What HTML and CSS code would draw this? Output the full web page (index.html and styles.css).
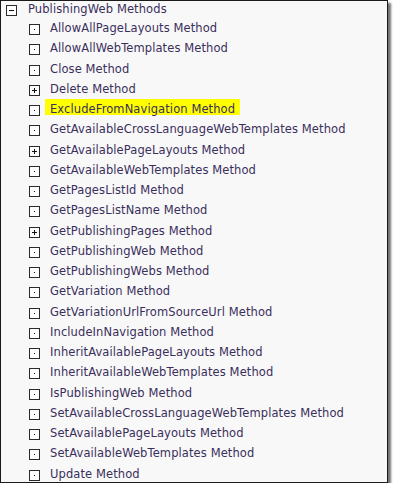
FILE: index.html
```html
<!DOCTYPE html>
<html lang="en">
<head>
    <meta charset="UTF-8">
    <title>PublishingWeb Methods</title>
    <link rel="stylesheet" href="styles.css">
</head>
<body>
    <div class="frame">
        <div class="node root">
            <span class="box minus"></span>
            <span class="label">PublishingWeb Methods</span>
        </div>
        <ul class="children">
            <li class="node"><span class="box dot"></span><span class="label">AllowAllPageLayouts Method</span></li>
            <li class="node"><span class="box dot"></span><span class="label">AllowAllWebTemplates Method</span></li>
            <li class="node"><span class="box dot"></span><span class="label">Close Method</span></li>
            <li class="node"><span class="box plus"></span><span class="label">Delete Method</span></li>
            <li class="node"><span class="box dot"></span><span class="label marked">ExcludeFromNavigation Method</span></li>
            <li class="node"><span class="box dot"></span><span class="label">GetAvailableCrossLanguageWebTemplates Method</span></li>
            <li class="node"><span class="box plus"></span><span class="label">GetAvailablePageLayouts Method</span></li>
            <li class="node"><span class="box dot"></span><span class="label">GetAvailableWebTemplates Method</span></li>
            <li class="node"><span class="box dot"></span><span class="label">GetPagesListId Method</span></li>
            <li class="node"><span class="box dot"></span><span class="label">GetPagesListName Method</span></li>
            <li class="node"><span class="box plus"></span><span class="label">GetPublishingPages Method</span></li>
            <li class="node"><span class="box dot"></span><span class="label">GetPublishingWeb Method</span></li>
            <li class="node"><span class="box dot"></span><span class="label">GetPublishingWebs Method</span></li>
            <li class="node"><span class="box dot"></span><span class="label">GetVariation Method</span></li>
            <li class="node"><span class="box dot"></span><span class="label">GetVariationUrlFromSourceUrl Method</span></li>
            <li class="node"><span class="box dot"></span><span class="label">IncludeInNavigation Method</span></li>
            <li class="node"><span class="box dot"></span><span class="label">InheritAvailablePageLayouts Method</span></li>
            <li class="node"><span class="box dot"></span><span class="label">InheritAvailableWebTemplates Method</span></li>
            <li class="node"><span class="box dot"></span><span class="label">IsPublishingWeb Method</span></li>
            <li class="node"><span class="box dot"></span><span class="label">SetAvailableCrossLanguageWebTemplates Method</span></li>
            <li class="node"><span class="box dot"></span><span class="label">SetAvailablePageLayouts Method</span></li>
            <li class="node"><span class="box dot"></span><span class="label">SetAvailableWebTemplates Method</span></li>
            <li class="node"><span class="box dot"></span><span class="label">Update Method</span></li>
        </ul>
    </div>
</body>
</html>
```

FILE: styles.css
```css
/* Page */
body {
    margin: 0;
    background: #ffffff;
    font-family: "DejaVu Sans", Verdana, sans-serif;
    font-size: 11.5px;
    letter-spacing: 0.1px;
    color: #3a2f5c;
}

/* Screenshot frame with drop shadow */
.frame {
    width: 386px;
    height: 481px;
    border: 1px solid #1a1a1a;
    background: #f8f8f8;
    box-shadow: 3px 3px 2px rgba(0, 0, 0, 0.55);
    overflow: hidden;
}

/* Tree rows */
.node {
    display: flex;
    align-items: center;
    height: 20.25px;
}

.root {
    height: 16px;
    padding-left: 5px;
}

.root .label {
    margin-left: 11px;
}

.children {
    list-style: none;
    margin: 0;
    padding: 1px 0 0 28px;
}

.label {
    margin-left: 10px;
    white-space: nowrap;
    line-height: 18px;
}

/* Yellow marker sits a little above the text centre */
.label.marked {
    margin-left: 5px;
    padding: 0 5px 0 5px;
    line-height: 20px;
    background: linear-gradient(#ffff00, #ffff00) 0 0 / 100% 16px no-repeat;
}

/* Expand / leaf boxes */
.box {
    position: relative;
    width: 9px;
    height: 9px;
    border: 1px solid #2a2a2a;
    background: #fdfdfd;
    flex-shrink: 0;
    margin-top: 3px;
}

.root .box {
    margin-top: 2px;
}

.dot::after {
    content: "";
    position: absolute;
    left: 4px;
    top: 4px;
    width: 1px;
    height: 1px;
    background: #111;
}

.plus::before,
.minus::before {
    content: "";
    position: absolute;
    left: 2px;
    top: 4px;
    width: 5px;
    height: 1px;
    background: #111;
}

.plus::after {
    content: "";
    position: absolute;
    left: 4px;
    top: 2px;
    width: 1px;
    height: 5px;
    background: #111;
}
```
